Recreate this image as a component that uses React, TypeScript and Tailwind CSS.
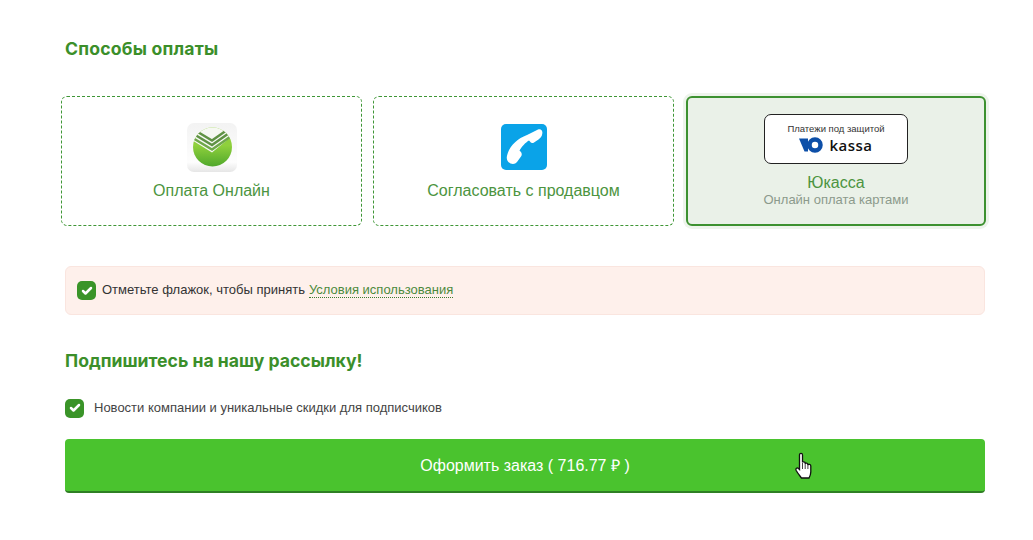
import { Check } from 'lucide-react';

function SberIcon() {
  return (
    <svg width="50" height="50" viewBox="0 0 50 50">
      <defs>
        <linearGradient id="sberBg" x1="0" y1="0" x2="0" y2="1">
          <stop offset="0" stopColor="#f3f3f3" />
          <stop offset="0.8" stopColor="#fdfdfd" />
          <stop offset="1" stopColor="#e6e6e6" />
        </linearGradient>
        <linearGradient id="sberBall" x1="0" y1="0" x2="0" y2="1">
          <stop offset="0.45" stopColor="#8fd03c" />
          <stop offset="1" stopColor="#4ba52a" />
        </linearGradient>
        <clipPath id="sberClip">
          <circle cx="25.500" cy="24" r="19.500" />
        </clipPath>
      </defs>
      <rect x="0" y="0" width="50" height="49" rx="7" fill="url(#sberBg)" />
      <g clipPath="url(#sberClip)">
        <rect x="5" y="4" width="42" height="41" fill="url(#sberBall)" />
        <path d="M0 14 L25 29.500 L50 9 V0 H0 Z" fill="#f6f8f2" />
        <path d="M5 14.500 L25 26.500 L45 12.500" fill="none" stroke="#6fa84a" strokeWidth="2.400" />
        <path d="M5 10 L25 22 L45 8" fill="none" stroke="#5f9244" strokeWidth="2.400" />
        <path d="M5 5.500 L25 17.500 L45 3.500" fill="none" stroke="#5f9244" strokeWidth="2.400" />
      </g>
    </svg>
  );
}

function PhoneIcon() {
  return (
    <svg width="46" height="46" viewBox="0 0 46 46">
      <rect width="46" height="46" rx="5" fill="#0aa3e8" />
      <path
        d="M26 11L37 5.500C40 4.500 41.800 6.500 41.300 9.500C41 12.500 39.500 14 37.500 15.500L33 18.500C31.500 19.500 30 19 29 17.500L28 16.500C24.500 18.500 20.500 23 18.500 26.500L20 28C21 29.500 21 31 20 32.500L16 38C14.500 40 12 40.500 9.500 39.500C7 38.500 5.500 36 5.800 33C7 24 15 15 26 11Z"
        fill="#fff"
      />
    </svg>
  );
}

function KassaBadge() {
  return (
    <div className="w-[144px] h-[50px] rounded-[7px] border border-[#222] bg-white flex flex-col items-center pt-[8px]">
      <span className="text-[9.5px] leading-[12px] text-[#333]">Платежи под защитой</span>
      <div className="flex items-center gap-[6px] mt-[1px]">
        <svg width="24" height="16" viewBox="0 0 24 16">
          <path d="M0 1.500H9V14.500H5.500Z" fill="#0d4fa8" />
          <circle cx="16" cy="8" r="5.500" fill="none" stroke="#0d4fa8" strokeWidth="4.500" />
        </svg>
        <span className="text-[15px] leading-[18px] font-semibold tracking-[0.5px] text-[#111] font-['Open_Sans',sans-serif]">kassa</span>
      </div>
    </div>
  );
}

function Tick() {
  return (
    <span className="w-[19px] h-[19px] rounded-[5px] bg-[#3a9428] flex items-center justify-center shrink-0">
      <Check className="w-[12px] h-[12px] text-white" strokeWidth={5} />
    </span>
  );
}

export default function App() {
  return (
    <div className="w-[1033px] h-[540px] bg-white pl-[65px] pr-[48px] overflow-hidden relative font-['Liberation_Sans',Arial,sans-serif]">
      <h2 className="pt-[38px] text-[17.6px] leading-[22px] font-bold tracking-[0.2px] text-[#3b8f2a] font-['Inter',sans-serif]">Способы оплаты</h2>

      <div className="grid grid-cols-[301px_301px_300px] gap-x-[11px] -ml-[4px] mt-[36px]">
        <div className="h-[130px] rounded-[6px] border border-dashed border-[#3f9636] flex flex-col items-center pt-[26px]">
          <SberIcon />
          <span className="mt-[8px] text-[16px] leading-[20px] text-[#4c9440]">Оплата Онлайн</span>
        </div>
        <div className="h-[130px] rounded-[6px] border border-dashed border-[#3f9636] flex flex-col items-center pt-[27px]">
          <PhoneIcon />
          <span className="mt-[11px] text-[16px] leading-[20px] text-[#4c9440]">Согласовать с продавцом</span>
        </div>
        <div className="ml-[1px] w-[300px] h-[130px] rounded-[6px] border-2 border-[#3d9130] bg-[#eaf1e8] ring-[3px] ring-[#eef4ec] flex flex-col items-center pt-[16px]">
          <KassaBadge />
          <span className="mt-[9px] text-[16px] leading-[20px] text-[#4c9440]">Юкасса</span>
          <span className="text-[13px] leading-[14px] text-[#8c9a8c]">Онлайн оплата картами</span>
        </div>
      </div>

      <div className="mt-[40px] h-[49px] rounded-[6px] border border-[#fae5df] bg-[#fef0eb] flex items-center pl-[11px]">
        <Tick />
        <span className="ml-[6px] mb-[1px] text-[13px] text-[#333]">Отметьте флажок, чтобы принять</span>
        <span className="ml-[4px] mb-[1px] text-[13px] leading-[15px] text-[#4c8a3c] border-b border-dotted border-[#3d7a30]">Условия использования</span>
      </div>

      <h2 className="mt-[35px] text-[17.6px] leading-[22px] font-bold text-[#3b8f2a] font-['Inter',sans-serif]">Подпишитесь на нашу рассылку!</h2>

      <div className="mt-[26px] flex items-center h-[20px]">
        <Tick />
        <span className="ml-[10px] text-[13px] text-[#444]">Новости компании и уникальные скидки для подписчиков</span>
      </div>

      <button className="mt-[21px] w-full h-[54px] rounded-[4px] bg-[#4ac32e] border-b-[2px] border-[#2f7f24] pt-[1px] text-white text-[16px] text-center">
        Оформить заказ ( 716.77 ₽ )
      </button>

      <svg className="absolute left-[795px] top-[452px]" width="18" height="27" viewBox="0 0 18 27">
        <path
          d="M4.500 3C4.500 .8 7.500 .8 7.500 3V10.500C7.500 9.500 10.200 9.500 10.200 11V11.800C10.500 10.800 12.900 10.800 12.900 12.500V13C13.300 12 15.800 12.300 15.800 14V20C15.800 22.500 14.800 24.500 14 26H6.500C5 24 2.800 21.500 1.200 18.500C.2 16.500 2.200 15 3.500 16.500L4.500 17.500Z"
          fill="#fff"
          stroke="#111"
          strokeWidth="1.300"
        />
        <path d="M7.500 11V17M10.200 11.500V17M12.900 12.500V17" stroke="#111" strokeWidth="0.800" fill="none" />
      </svg>
    </div>
  );
}
